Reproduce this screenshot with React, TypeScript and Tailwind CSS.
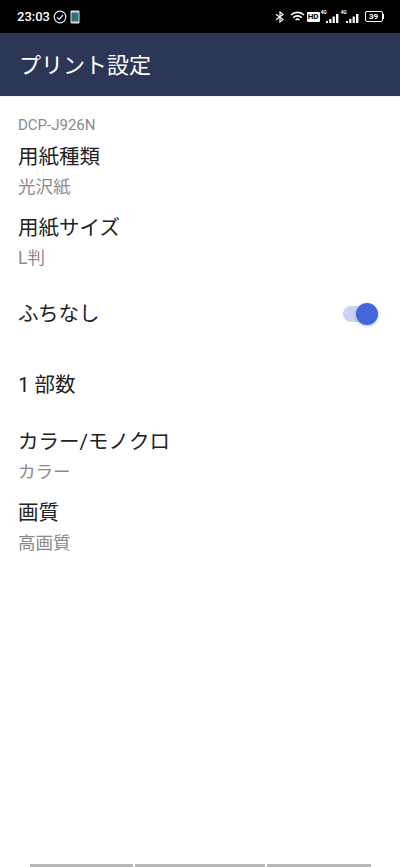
const font = { fontFamily: '"Roboto", "Noto Sans CJK JP", sans-serif' };

function SettingRow({ title, value }: { title: string; value: string }) {
  return (
    <div className="flex flex-col">
      <p className="text-[20.5px] leading-[30px] text-[#222222]">{title}</p>
      <p className="mt-[2px] text-[17.5px] leading-[26px] text-[#8a8a8a]">{value}</p>
    </div>
  );
}

function SignalBars() {
  return (
    <div className="relative ml-[1px] h-[13px] w-[19px]">
      <span className="absolute top-[-1px] left-[0px] text-[5px] leading-[7px] font-bold">4G</span>
      <svg className="absolute right-0 bottom-0" width="15" height="10" viewBox="0 0 15 10" fill="#ffffff">
        <path d="M1 8h2v2H1zM4.2 6h2.2v4H4.2zM7.6 3.5h2.2V10H7.6zM11 1h2.4v9H11z" />
      </svg>
    </div>
  );
}

function StatusBar() {
  return (
    <div className="flex h-[33px] items-center justify-between bg-black pl-[17px] pr-[16px] text-white">
      <div className="flex items-center gap-[3px]">
        <span className="text-[13px] font-medium">23:03</span>
        <svg width="14" height="14" viewBox="0 0 14 14" fill="none" stroke="#eeeeee" strokeWidth="1.2">
          <circle cx="7" cy="7" r="5.8" />
          <path d="M4 7.2l2.2 2.2L10 5" />
        </svg>
        <svg width="10" height="14" viewBox="0 0 10 14">
          <rect x="0.5" y="0.5" width="9" height="13" rx="1" fill="#dddddd" />
          <rect x="1.5" y="2.5" width="7" height="9" fill="#2f6f7f" />
        </svg>
      </div>
      <div className="flex items-center">
        <svg width="10" height="12" viewBox="0 0 10 12" fill="none" stroke="#ffffff" strokeWidth="1.2">
          <path d="M1 3.2l7 5.4L5 11V1l3 2.4L1 8.8" />
        </svg>
        <svg className="ml-[5px]" width="15" height="12" viewBox="0 0 15 12" fill="none" stroke="#ffffff" strokeWidth="1.7">
          <path d="M1 4a9.4 9.4 0 0 1 13 0" />
          <path d="M3.3 6.6a6 6 0 0 1 8.4 0" />
          <path d="M5.6 9a2.8 2.8 0 0 1 3.8 0" />
        </svg>
        <span className="ml-[2px] rounded-[1px] bg-white px-[1px] text-[8px] leading-[10px] font-bold text-black">HD</span>
        <SignalBars />
        <SignalBars />
        <div className="ml-[5px] flex items-center">
          <div className="flex h-[11px] w-[18px] items-center justify-center rounded-[2px] border border-white text-[8px] leading-none font-bold">39</div>
          <div className="h-[5px] w-[1.5px] bg-white" />
        </div>
      </div>
    </div>
  );
}

export default function App() {
  return (
    <div className="flex h-[867px] w-[400px] flex-col overflow-hidden bg-white" style={font}>
      <StatusBar />
      <header className="flex h-[63px] items-center bg-[#2c3657] px-[19px] pt-[1px]">
        <h1 className="text-[22px] font-normal text-white">プリント設定</h1>
      </header>
      <main className="flex flex-1 flex-col border-t border-[#f1f3fb] px-[18px] pt-[20px]">
        <p className="text-[15px] leading-[17px] text-[#8a8a8a]">DCP-J926N</p>
        <div className="mt-[8px]">
          <SettingRow title="用紙種類" value="光沢紙" />
        </div>
        <div className="mt-[13px]">
          <SettingRow title="用紙サイズ" value="L判" />
        </div>
        <div className="mt-[28px] flex h-[30px] items-center justify-between">
          <p className="text-[20.5px] text-[#222222]">ふちなし</p>
          <div className="relative mr-[5px] h-[16px] w-[34px] rounded-full bg-[#c9d3f2]">
            <span className="absolute top-[-3px] right-[-1px] h-[22px] w-[22px] rounded-full bg-[#4566d8] shadow-[0_1px_3px_rgba(60,90,200,0.4)]" />
          </div>
        </div>
        <p className="mt-[41px] text-[20.5px] leading-[30px] text-[#222222]">1 部数</p>
        <div className="mt-[27px]">
          <SettingRow title="カラー/モノクロ" value="カラー" />
        </div>
        <div className="mt-[13px]">
          <SettingRow title="画質" value="高画質" />
        </div>
      </main>
      <div className="flex h-[3px] gap-[2px] pr-[29px] pl-[30px]">
        <div className="w-[103px] bg-[#b8b8b8]" />
        <div className="w-[130px] bg-[#b8b8b8]" />
        <div className="flex-1 bg-[#b8b8b8]" />
      </div>
    </div>
  );
}
